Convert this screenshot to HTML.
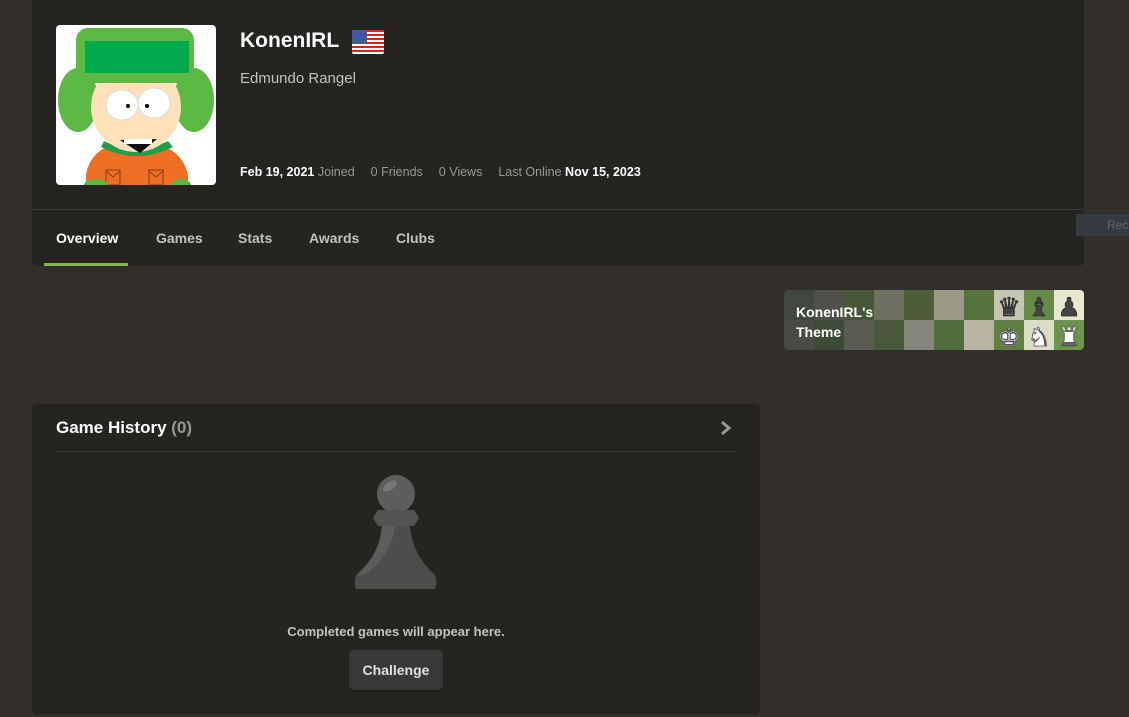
<!DOCTYPE html>
<html><head><style>
*{margin:0;padding:0;box-sizing:border-box}
body{width:1129px;height:717px;background:#312e2b;font-family:"Liberation Sans",sans-serif;position:relative;overflow:hidden;color:#fff}
.card{position:absolute;background:#262421;border-radius:5px}
.abs{position:absolute}
.tab{position:absolute;top:230px;font-size:14px;font-weight:bold;color:#c3c2c1}
</style></head><body>
<div class="card" style="left:32px;top:0;width:1052px;height:266px;border-radius:0 0 5px 5px"></div>
<div class="abs" style="left:32px;top:209px;width:1052px;height:1px;background:#3c3a37"></div>
<div class="abs" style="left:56px;top:25px;width:160px;height:160px;background:#fff;border-radius:4px;overflow:hidden">
<svg width="160" height="160" viewBox="0 0 160 160">
<ellipse cx="22" cy="75" rx="20" ry="32" fill="#5bb944"/>
<ellipse cx="138" cy="75" rx="20" ry="32" fill="#5bb944"/>
<path d="M30 150 Q35 118 80 115 Q125 118 132 150 L132 160 L30 160Z" fill="#ee6e24"/>
<path d="M45 122 Q80 140 117 122 L112 116 Q80 132 48 116Z" fill="#1ea04a"/>
<ellipse cx="80" cy="82" rx="45" ry="45" fill="#fde1bb"/>
<rect x="20" y="3" width="118" height="55" rx="12" fill="#5bb944"/>
<rect x="29" y="16" width="104" height="32" fill="#00ab4e"/>
<ellipse cx="66" cy="80" rx="16" ry="15" fill="#fff" stroke="#ddd"/>
<ellipse cx="98" cy="78" rx="16" ry="15" fill="#fff" stroke="#ddd"/>
<circle cx="72" cy="81" r="2" fill="#000"/><circle cx="91" cy="81" r="2" fill="#000"/>
<path d="M64 115 L101 114 L84 128Z" fill="#111"/>
<rect x="68" y="114" width="28" height="5" fill="#fff"/>
<path d="M50 145h14v15h-14zM93 145h14v15h-14z" fill="none" stroke="#8a3b17"/>
<path d="M50 146l7 6 7-6M93 146l7 6 7-6" fill="none" stroke="#8a3b17"/>
<ellipse cx="40" cy="160" rx="12" ry="6" fill="#5bb944"/><ellipse cx="125" cy="160" rx="10" ry="6" fill="#5bb944"/>
</svg></div>
<div class="abs" style="left:240px;top:29px;font-size:21px;font-weight:bold">KonenIRL</div>
<svg class="abs" style="left:352px;top:30px" width="32" height="24" viewBox="0 0 32 24"><rect width="32" height="24" rx="2" fill="#fff"/><g fill="#d22"><rect y="0" width="32" height="2"/><rect y="4" width="32" height="2"/><rect y="8" width="32" height="2"/><rect y="12" width="32" height="2"/><rect y="16" width="32" height="2"/><rect y="20" width="32" height="2"/></g><rect width="15" height="13" fill="#4455aa"/></svg>
<div class="abs" style="left:240px;top:70px;font-size:15px;color:#c3c2c1">Edmundo Rangel</div>
<div class="abs" style="left:240px;top:165px;font-size:12.5px;color:#989795;white-space:nowrap"><b style="color:#fff">Feb 19, 2021</b> Joined<span style="margin-left:16px">0 Friends</span><span style="margin-left:16px">0 Views</span><span style="margin-left:16px">Last Online</span> <b style="color:#fff">Nov 15, 2023</b></div>
<div class="tab" style="left:56px;color:#fff">Overview</div>
<div class="tab" style="left:156px">Games</div>
<div class="tab" style="left:238px">Stats</div>
<div class="tab" style="left:309px">Awards</div>
<div class="tab" style="left:396px">Clubs</div>
<div class="abs" style="left:44px;top:263px;width:84px;height:3px;background:#81b64c"></div>
<div class="abs" style="left:1076px;top:214px;width:60px;height:22px;background:#343a40"></div>
<div class="abs" style="left:1107px;top:218px;font-size:12px;color:#666">Rec</div>
<div class="abs" style="left:784px;top:290px;width:300px;height:60px;border-radius:4px;overflow:hidden">
<svg width="300" height="60">
<g>
<rect x="0" y="0" width="30" height="30" fill="#40483a"/><rect x="30" y="0" width="30" height="30" fill="#504f49"/><rect x="60" y="0" width="30" height="30" fill="#46573a"/><rect x="90" y="0" width="30" height="30" fill="#6f705f"/><rect x="120" y="0" width="30" height="30" fill="#4b5e38"/><rect x="150" y="0" width="30" height="30" fill="#9a9a86"/><rect x="180" y="0" width="30" height="30" fill="#56733e"/><rect x="210" y="0" width="30" height="30" fill="#c5c6b2"/><rect x="240" y="0" width="30" height="30" fill="#668a48"/><rect x="270" y="0" width="30" height="30" fill="#e8e8d2"/>
<rect x="0" y="30" width="30" height="30" fill="#4a4944"/><rect x="30" y="30" width="30" height="30" fill="#3d4a34"/><rect x="60" y="30" width="30" height="30" fill="#5b5b52"/><rect x="90" y="30" width="30" height="30" fill="#47593a"/><rect x="120" y="30" width="30" height="30" fill="#86857a"/><rect x="150" y="30" width="30" height="30" fill="#506d3c"/><rect x="180" y="30" width="30" height="30" fill="#b5b5a2"/><rect x="210" y="30" width="30" height="30" fill="#5e8043"/><rect x="240" y="30" width="30" height="30" fill="#dcdcc6"/><rect x="270" y="30" width="30" height="30" fill="#6c944c"/>
</g>
<g font-size="26" text-anchor="middle" font-family="DejaVu Sans">
<text x="225" y="26" fill="#444" stroke="#222" stroke-width="0.6">♛</text><text x="255" y="26" fill="#444" stroke="#222" stroke-width="0.6">♝</text><text x="285" y="26" fill="#444" stroke="#222" stroke-width="0.6">♟</text>
<text x="225" y="56" fill="#fff" stroke="#555" stroke-width="0.8">♚</text><text x="255" y="56" fill="#fff" stroke="#555" stroke-width="0.8">♞</text><text x="285" y="56" fill="#fff" stroke="#555" stroke-width="0.8">♜</text>
</g>
</svg>
<div class="abs" style="left:12px;top:12px;font-size:14px;font-weight:bold;line-height:20px">KonenIRL's<br>Theme</div>
</div>
<div class="card" style="left:32px;top:404px;width:728px;height:310px"></div>
<div class="abs" style="left:56px;top:418px;font-size:17px;font-weight:bold">Game History <span style="color:#989795">(0)</span></div>
<svg class="abs" style="left:719px;top:420px" width="14" height="16"><path d="M3 2l7 6-7 6" fill="none" stroke="#989795" stroke-width="3"/></svg>
<div class="abs" style="left:56px;top:451px;width:680px;height:1px;background:#3c3a37"></div>
<svg class="abs" style="left:352px;top:474px" width="90" height="126" viewBox="0 0 90 126">
<circle cx="44" cy="20" r="19" fill="#5e5d5b"/>
<ellipse cx="38" cy="12" rx="8" ry="4" fill="#777" transform="rotate(-35 38 12)"/>
<path d="M26 36 L62 36 L67 44 L62 52 L26 52 L21 44Z" fill="#555452"/>
<path d="M30 52 L58 52 Q60 80 82 100 Q86 106 83 115 L4 115 Q1 106 5 100 Q28 80 30 52Z" fill="#4e4d4b"/>
<path d="M30 52 L43 52 Q40 80 14 100 L5 102 Q28 80 30 52Z" fill="#5e5d5b"/>
</svg>
<div class="abs" style="left:32px;top:624px;width:728px;text-align:center;font-size:13px;font-weight:bold;color:#c3c2c1">Completed games will appear here.</div>
<div class="abs" style="left:349px;top:650px;width:94px;height:40px;background:#3a3836;border-radius:5px;box-shadow:0 2px 0 #1e1c1a;text-align:center;line-height:40px;font-size:14px;font-weight:bold;color:#e0e0df">Challenge</div>
</body></html>
